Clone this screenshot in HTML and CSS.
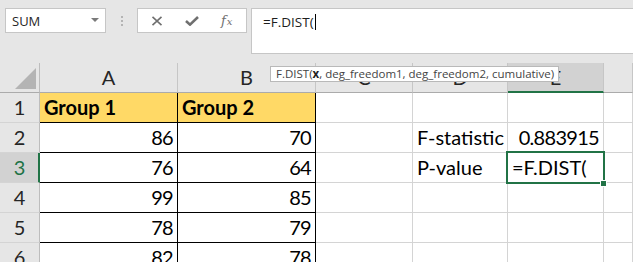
FILE: index.html
```html
<!DOCTYPE html>
<html lang="en">
<head>
    <meta charset="UTF-8">
    <title>F.DIST</title>
    <link rel="stylesheet" href="styles.css">
</head>
<body>
    <div class="toolbar">
        <div class="name-box">
            <span>SUM</span>
            <span class="caret"></span>
        </div>
        <div class="grip"><i></i><i></i><i></i></div>
        <div class="fn-buttons">
            <svg class="btn" width="12" height="10" viewBox="0 0 12 10">
                <path d="M1.5 0.8 L10.5 9.2 M10.5 0.8 L1.5 9.2" stroke="#6f6f6f" stroke-width="1.6" fill="none"/>
            </svg>
            <svg class="btn" width="14" height="10" viewBox="0 0 14 10">
                <path d="M1 5 L5 8.6 L13 1" stroke="#6f6f6f" stroke-width="2.6" fill="none"/>
            </svg>
            <span class="fx"><i>f</i><i class="fx-x">x</i></span>
        </div>
        <div class="formula-box">=F.DIST(<span class="cursor"></span></div>
    </div>

    <div class="sheet">
        <div class="corner"><span class="tri"></span></div>
        <div class="col-hdr">A</div>
        <div class="col-hdr">B</div>
        <div class="col-hdr">C</div>
        <div class="col-hdr">D</div>
        <div class="col-hdr active">E</div>
        <div class="col-hdr"></div>

        <div class="row-hdr">1</div>
        <div class="cell data head">Group 1</div>
        <div class="cell data head">Group 2</div>
        <div class="cell"></div>
        <div class="cell"></div>
        <div class="cell"></div>
        <div class="cell"></div>

        <div class="row-hdr">2</div>
        <div class="cell data num">86</div>
        <div class="cell data num">70</div>
        <div class="cell"></div>
        <div class="cell">F-statistic</div>
        <div class="cell num">0.883915</div>
        <div class="cell"></div>

        <div class="row-hdr active">3</div>
        <div class="cell data num">76</div>
        <div class="cell data num">64</div>
        <div class="cell"></div>
        <div class="cell">P-value</div>
        <div class="cell editing">=F.DIST(<span class="selection"></span><span class="handle"></span></div>
        <div class="cell"></div>

        <div class="row-hdr">4</div>
        <div class="cell data num">99</div>
        <div class="cell data num">85</div>
        <div class="cell"></div>
        <div class="cell"></div>
        <div class="cell"></div>
        <div class="cell"></div>

        <div class="row-hdr">5</div>
        <div class="cell data num">78</div>
        <div class="cell data num">79</div>
        <div class="cell"></div>
        <div class="cell"></div>
        <div class="cell"></div>
        <div class="cell"></div>

        <div class="row-hdr">6</div>
        <div class="cell data num">82</div>
        <div class="cell data num">78</div>
        <div class="cell"></div>
        <div class="cell"></div>
        <div class="cell"></div>
        <div class="cell"></div>
    </div>

    <div class="tooltip">F.DIST(<b>x</b>, deg_freedom1, deg_freedom2, cumulative)</div>
</body>
</html>
```

FILE: styles.css
```css
body { margin: 0; width: 633px; height: 262px; overflow: hidden; background: #ffffff; font-family: "Lato", sans-serif; position: relative; }

/* formula bar */
.toolbar { display: flex; align-items: flex-start; height: 63px; box-sizing: border-box; padding: 8px 0 0 5px; background: #e6e6e6; font-family: "Open Sans", sans-serif; color: #262626; }
.name-box { width: 101px; height: 25px; box-sizing: border-box; border: 1px solid #c6c6c6; background: #fff; display: flex; align-items: center; justify-content: space-between; padding: 0 6px 0 6px; font-size: 13px; }
.caret { width: 0; height: 0; border-left: 4px solid transparent; border-right: 4px solid transparent; border-top: 4px solid #7a7a7a; margin-top: -2px; }
.grip { width: 31px; height: 25px; display: flex; flex-direction: column; align-items: center; justify-content: center; gap: 2px; }
.grip i { width: 2px; height: 2px; background: #b4b4b4; }
.fn-buttons { width: 110px; height: 25px; box-sizing: border-box; border: 1px solid #c6c6c6; background: #fff; display: flex; align-items: center; padding-left: 13px; gap: 22px; }
.fx { font-family: "DejaVu Serif", serif; color: #6f6f6f; font-size: 13px; }
.fx-x { font-size: 10px; margin-left: 1px; }
.formula-box { flex: 1; height: 46px; box-sizing: border-box; margin-left: 4px; border: 1px solid #c6c6c6; border-right: none; background: #fff; padding: 4px 0 0 11px; font-size: 13.5px; line-height: 18px; color: #1e1e1e; }
.cursor { display: inline-block; width: 1px; height: 16px; background: #000; vertical-align: -3px; margin-left: 1px; }

/* grid; column F is cut by the window edge */
.sheet { display: grid; grid-template-columns: 40px 138px 138px 97px 95px 96px 1fr; grid-auto-rows: 30px; font-size: 20px; line-height: 29px; }
.sheet > div { box-sizing: border-box; border-right: 1px solid #d4d4d4; border-bottom: 1px solid #d4d4d4; white-space: nowrap; }
.corner { background: #e6e6e6; position: relative; border-right-color: #bdbdbd !important; border-bottom-color: #ababab !important; }
.tri { position: absolute; right: 3px; bottom: 3px; width: 0; height: 0; border-left: 21px solid transparent; border-bottom: 21px solid #b4b4b4; }
.col-hdr { background: #e6e6e6; text-align: center; color: #262626; border-right-color: #c6c6c6 !important; border-bottom-color: #ababab !important; }
.col-hdr.active { background: #d2d2d2; border-bottom: 2px solid #217346 !important; }
.row-hdr { background: #e6e6e6; text-align: center; color: #262626; border-right-color: #bdbdbd !important; }
.row-hdr.active { background: #d2d2d2; color: #217346; border-right: 2px solid #217346 !important; padding-left: 1px; }
.cell { padding: 0 4px; color: #000; }
.num { text-align: right; letter-spacing: -0.7px; }
.data { border-right-color: #000 !important; border-bottom-color: #000 !important; }
.head { background: #ffd966; font-weight: bold; }
.editing { position: relative; }
.selection { position: absolute; left: -2px; top: -2px; width: 99px; height: 33px; box-sizing: border-box; border: 2px solid #217346; }
.handle { position: absolute; left: 93px; top: 28px; width: 5px; height: 5px; background: #217346; outline: 1px solid #fff; }

/* function tooltip */
.tooltip { position: absolute; left: 270px; top: 66px; height: 16px; box-sizing: border-box; padding: 0 4px 0 5px; border: 1px solid #b9b9b9; background: #fff; font-family: "Open Sans", sans-serif; font-size: 11.5px; line-height: 14px; color: #444; white-space: nowrap; }
.tooltip b { color: #222; }
```
